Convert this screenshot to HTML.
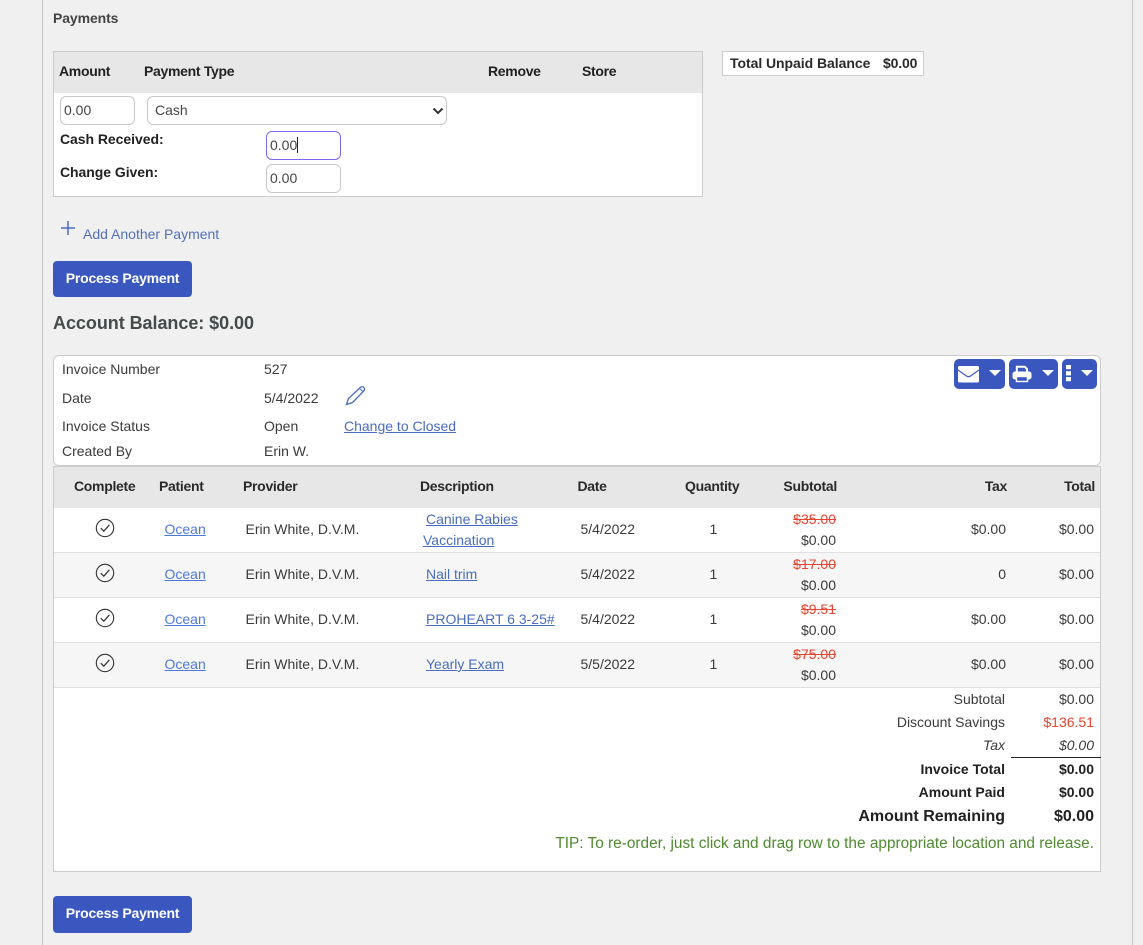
<!DOCTYPE html>
<html><head><meta charset="utf-8">
<style>
html,body{margin:0;padding:0}
body{width:1143px;height:945px;background:#f0f0f0;position:relative;overflow:hidden;font-family:"Liberation Sans",Arial,sans-serif;font-size:14px;color:#3a3a3a}
.t,.r{position:absolute;white-space:nowrap;line-height:20px;height:20px}
.r{text-align:right}
.b{font-weight:bold;letter-spacing:-.05px}
.h{letter-spacing:-.3px}
.k{color:#212121}
.box{position:absolute;box-sizing:border-box}
.a{color:#4a6cc0;text-decoration:underline}
.p{color:#4f78dd;text-decoration:underline}
.inp{position:absolute;box-sizing:border-box;width:75px;height:29px;background:#fff;border:1px solid #c8c8c8;border-radius:6px;line-height:27px;padding-left:3px;color:#444}
.btn{position:absolute;left:53px;width:139px;height:36px;background:#3a57c0;border-radius:4px;color:#fff;font-weight:bold;text-align:center;line-height:34px;font-size:14px;letter-spacing:-.22px}
.ib{position:absolute;top:359px;height:30px;background:#3a57c0;border-radius:5px}
.car{position:absolute;top:11px;width:0;height:0;border-left:6px solid transparent;border-right:6px solid transparent;border-top:6px solid #fff}
.row{position:absolute;left:54px;width:1046px;height:45px;box-sizing:border-box;border-bottom:1px solid #e0e0e0}
.red{color:#e8432e}
svg{position:absolute;overflow:visible}
</style></head>
<body>
<div class="box" style="left:42px;top:0;width:1091px;height:945px;border-left:1px solid #c4c4c4;border-right:1px solid #c4c4c4"></div>

<div class="t b" style="left:53px;top:8px;font-size:14px;color:#444;letter-spacing:-.1px">Payments</div>

<div class="box" style="left:53px;top:51px;width:650px;height:146px;background:#fff;border:1px solid #ccc"></div>
<div class="box" style="left:54px;top:52px;width:648px;height:41px;background:#e7e7e7"></div>
<div class="t b k h" style="left:59px;top:61px">Amount</div>
<div class="t b k h" style="left:144px;top:61px">Payment Type</div>
<div class="t b k h" style="left:488px;top:61px">Remove</div>
<div class="t b k h" style="left:582px;top:61px">Store</div>

<div class="inp" style="left:60px;top:96px">0.00</div>
<div class="inp" style="left:147px;top:96px;width:300px;padding-left:7px">Cash</div>
<svg style="left:432px;top:106px" width="12" height="10" viewBox="0 0 12 10"><path d="M1.5 2.5L6 7l4.500-4.500" fill="none" stroke="#333" stroke-width="2"/></svg>
<div class="t b k" style="left:60px;top:129px">Cash Received:</div>
<div class="inp" style="left:266px;top:131px;border-color:#7b68ee">0.00<span style="display:inline-block;width:1px;height:16px;background:#222;vertical-align:-3px"></span></div>
<div class="t b k" style="left:60px;top:162px">Change Given:</div>
<div class="inp" style="left:266px;top:164px">0.00</div>

<div class="box" style="left:722px;top:51px;width:202px;height:25px;background:#fff;border:1px solid #ccc"></div>
<div class="t b" style="left:730px;top:53px;color:#2a2a2a">Total Unpaid Balance</div>
<div class="t b" style="left:883px;top:53px;color:#2a2a2a;letter-spacing:-.15px">$0.00</div>

<svg style="left:60px;top:220px" width="16" height="16" viewBox="0 0 16 16"><path d="M8 1v14M1 8h14" stroke="#4a6cc0" stroke-width="1.500" fill="none"/></svg>
<div class="t" style="left:83px;top:224px;color:#5470b8">Add Another Payment</div>

<div class="btn" style="top:261px">Process Payment</div>
<div class="t b" style="left:53px;top:313px;font-size:18px;color:#454a4a;letter-spacing:-.05px">Account Balance: $0.00</div>

<div class="box" style="left:53px;top:355px;width:1048px;height:111px;background:#fff;border:1px solid #ccc;border-radius:6px"></div>
<div class="t" style="left:62px;top:359px">Invoice Number</div><div class="t" style="left:264px;top:359px">527</div>
<div class="t" style="left:62px;top:388px">Date</div><div class="t" style="left:264px;top:388px">5/4/2022</div>
<svg style="left:345px;top:385px" width="22" height="21" viewBox="0 0 22 21"><path d="M1.500 19.500L3.500 13.500 15.300 2.500c1-1 2.600-1 3.500-.1s1 2.500 0 3.500L7.500 17.500z" fill="none" stroke="#4a6cc0" stroke-width="1.300"/><path d="M14.500 3.500l4 3.500" fill="none" stroke="#4a6cc0" stroke-width="1"/></svg>
<div class="t" style="left:62px;top:416px">Invoice Status</div><div class="t" style="left:264px;top:416px">Open</div>
<div class="t a" style="left:344px;top:416px">Change to Closed</div>
<div class="t" style="left:62px;top:441px">Created By</div><div class="t" style="left:264px;top:441px">Erin W.</div>

<div class="ib" style="left:954px;width:51px">
<svg style="left:4px;top:7px" width="22" height="17" viewBox="0 0 22 17"><rect x="0" y="0" width="21" height="16.500" rx="1.500" fill="#fff"/><path d="M0 4l8.500 6c1.200.8 2.800.8 4 0L21 4" fill="none" stroke="#3a57c0" stroke-width="1.100"/></svg>
<div class="car" style="left:35px"></div></div>
<div class="ib" style="left:1009px;width:49px">
<svg style="left:3px;top:6px" width="20" height="18" viewBox="0 0 20 18"><path d="M4.800 7V1.800h8L15 4v3" fill="none" stroke="#fff" stroke-width="2"/><rect x="0.500" y="6.500" width="19" height="8" rx="2.500" fill="#fff"/><rect x="4.500" y="11.500" width="11" height="5" fill="#3a57c0" stroke="#fff" stroke-width="1.400"/></svg>
<div class="car" style="left:33px"></div></div>
<div class="ib" style="left:1062px;width:35px">
<svg style="left:4px;top:6px" width="6" height="17" viewBox="0 0 6 17"><rect x="0" y="0" width="5" height="4.200" fill="#fff"/><rect x="0" y="6.200" width="5" height="4.200" fill="#fff"/><rect x="0" y="12" width="5" height="4.200" fill="#fff"/></svg>
<div class="car" style="left:19px"></div></div>

<div class="box" style="left:53px;top:466px;width:1048px;height:406px;background:#fff;border:1px solid #ccc;border-top:1px solid #ccc"></div>
<div class="box" style="left:54px;top:467px;width:1046px;height:41px;background:#e7e7e7"></div>
<div class="t b h" style="left:74px;top:476px;color:#2a2a2a">Complete</div>
<div class="t b h" style="left:159px;top:476px;color:#2a2a2a">Patient</div>
<div class="t b h" style="left:243px;top:476px;color:#2a2a2a">Provider</div>
<div class="t b h" style="left:420px;top:476px;color:#2a2a2a">Description</div>
<div class="t b h" style="left:577.500px;top:476px;color:#2a2a2a">Date</div>
<div class="t b h" style="left:685px;top:476px;color:#2a2a2a">Quantity</div>
<div class="r b h" style="right:306px;top:476px;color:#2a2a2a">Subtotal</div>
<div class="r b h" style="right:136px;top:476px;color:#2a2a2a">Tax</div>
<div class="r b h" style="right:48px;top:476px;color:#2a2a2a">Total</div>

<div class="row" style="top:508px;background:#fff"></div>
<div class="row" style="top:553px;background:#f6f6f6"></div>
<div class="row" style="top:598px;background:#fff"></div>
<div class="row" style="top:643px;background:#f6f6f6"></div>

<!-- row 1 -->
<svg style="left:95px;top:518px" width="20" height="20" viewBox="0 0 20 20"><circle cx="10" cy="10" r="8.700" fill="none" stroke="#333" stroke-width="1.100"/><path d="M5.800 10.200l3 3 5.600-6.400" fill="none" stroke="#333" stroke-width="1.200"/></svg>
<div class="t p" style="left:164.500px;top:519px">Ocean</div>
<div class="t" style="left:245.500px;top:519px">Erin White, D.V.M.</div>
<div class="t a" style="left:426px;top:509px">Canine Rabies</div>
<div class="t a" style="left:423px;top:530px">Vaccination</div>
<div class="t" style="left:580.500px;top:519px">5/4/2022</div>
<div class="t" style="left:709.500px;top:519px">1</div>
<div class="r red" style="right:307px;top:509px;text-decoration:line-through">$35.00</div>
<div class="r" style="right:307px;top:530px">$0.00</div>
<div class="r" style="right:137px;top:519px">$0.00</div>
<div class="r" style="right:49px;top:519px">$0.00</div>
<!-- row 2 -->
<svg style="left:95px;top:563px" width="20" height="20" viewBox="0 0 20 20"><circle cx="10" cy="10" r="8.700" fill="none" stroke="#333" stroke-width="1.100"/><path d="M5.800 10.200l3 3 5.600-6.400" fill="none" stroke="#333" stroke-width="1.200"/></svg>
<div class="t p" style="left:164.500px;top:564px">Ocean</div>
<div class="t" style="left:245.500px;top:564px">Erin White, D.V.M.</div>
<div class="t a" style="left:426px;top:564px">Nail trim</div>
<div class="t" style="left:580.500px;top:564px">5/4/2022</div>
<div class="t" style="left:709.500px;top:564px">1</div>
<div class="r red" style="right:307px;top:554px;text-decoration:line-through">$17.00</div>
<div class="r" style="right:307px;top:575px">$0.00</div>
<div class="r" style="right:137px;top:564px">0</div>
<div class="r" style="right:49px;top:564px">$0.00</div>
<!-- row 3 -->
<svg style="left:95px;top:608px" width="20" height="20" viewBox="0 0 20 20"><circle cx="10" cy="10" r="8.700" fill="none" stroke="#333" stroke-width="1.100"/><path d="M5.800 10.200l3 3 5.600-6.400" fill="none" stroke="#333" stroke-width="1.200"/></svg>
<div class="t p" style="left:164.500px;top:609px">Ocean</div>
<div class="t" style="left:245.500px;top:609px">Erin White, D.V.M.</div>
<div class="t a" style="left:426px;top:609px">PROHEART 6 3-25#</div>
<div class="t" style="left:580.500px;top:609px">5/4/2022</div>
<div class="t" style="left:709.500px;top:609px">1</div>
<div class="r red" style="right:307px;top:599px;text-decoration:line-through">$9.51</div>
<div class="r" style="right:307px;top:620px">$0.00</div>
<div class="r" style="right:137px;top:609px">$0.00</div>
<div class="r" style="right:49px;top:609px">$0.00</div>
<!-- row 4 -->
<svg style="left:95px;top:653px" width="20" height="20" viewBox="0 0 20 20"><circle cx="10" cy="10" r="8.700" fill="none" stroke="#333" stroke-width="1.100"/><path d="M5.800 10.200l3 3 5.600-6.400" fill="none" stroke="#333" stroke-width="1.200"/></svg>
<div class="t p" style="left:164.500px;top:654px">Ocean</div>
<div class="t" style="left:245.500px;top:654px">Erin White, D.V.M.</div>
<div class="t a" style="left:426px;top:654px">Yearly Exam</div>
<div class="t" style="left:580.500px;top:654px">5/5/2022</div>
<div class="t" style="left:709.500px;top:654px">1</div>
<div class="r red" style="right:307px;top:644px;text-decoration:line-through">$75.00</div>
<div class="r" style="right:307px;top:665px">$0.00</div>
<div class="r" style="right:137px;top:654px">$0.00</div>
<div class="r" style="right:49px;top:654px">$0.00</div>

<!-- totals -->
<div class="r" style="right:138px;top:689px">Subtotal</div><div class="r" style="right:49px;top:689px">$0.00</div>
<div class="r" style="right:138px;top:712px">Discount Savings</div><div class="r" style="right:49px;top:712px;color:#e8432e">$136.51</div>
<div class="r" style="right:138px;top:735px;font-style:italic">Tax</div><div class="r" style="right:49px;top:735px;font-style:italic">$0.00</div>
<div class="box" style="left:1011px;top:757px;width:90px;height:1px;background:#222"></div>
<div class="r b k" style="right:138px;top:759px;letter-spacing:0">Invoice Total</div><div class="r b k" style="right:49px;top:759px;letter-spacing:0">$0.00</div>
<div class="r b k" style="right:138px;top:782px;letter-spacing:0">Amount Paid</div><div class="r b k" style="right:49px;top:782px;letter-spacing:0">$0.00</div>
<div class="r b k" style="right:138px;top:807px;font-size:16px;letter-spacing:0">Amount Remaining</div><div class="r b k" style="right:49px;top:807px;font-size:16px;letter-spacing:0">$0.00</div>
<div class="r" style="right:49px;top:834px;color:#4f8a2f;font-size:15.400px">TIP: To re-order, just click and drag row to the appropriate location and release.</div>

<div class="btn" style="top:896px;height:37px">Process Payment</div>
</body></html>
